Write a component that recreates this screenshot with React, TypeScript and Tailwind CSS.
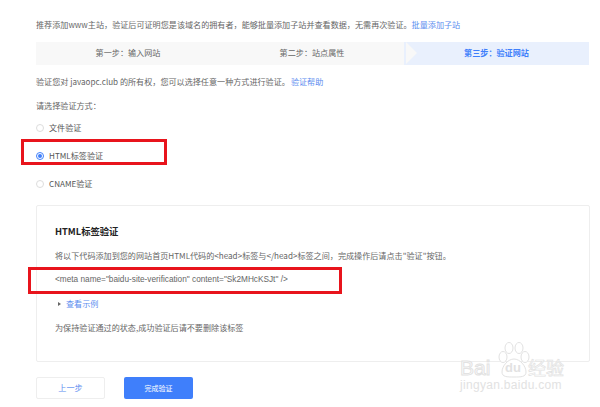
const font = { fontFamily: '"Noto Sans CJK SC", sans-serif' }

function Radio({ label, checked }: { label: string; checked?: boolean }) {
  return (
    <div className="flex h-[28px] items-center gap-[5px] text-[8.1px] text-[#555]">
      <span
        className={
          checked
            ? 'flex h-[8px] w-[8px] items-center justify-center rounded-full border border-[#3f7ffb]'
            : 'h-[8px] w-[8px] rounded-full border border-[#ddd]'
        }
      >
        {checked && <span className="h-[4px] w-[4px] rounded-full bg-[#3f7ffb]" />}
      </span>
      <span>{label}</span>
    </div>
  )
}

function Step({ label, width, active }: { label: string; width: string; active?: boolean }) {
  return (
    <div
      className={`flex items-center justify-center ${width} ${
        active ? 'font-bold text-[#3f7ffb]' : 'text-[#666]'
      }`}
    >
      {label}
    </div>
  )
}

function Watermark() {
  return (
    <div className="absolute left-[460px] top-[342px] w-[110px] text-[#e2e2e2]">
      <svg className="absolute left-[36px] top-0" width="34" height="36" viewBox="0 0 34 36" fill="#fff" stroke="#e2e2e2" strokeWidth="1">
        <ellipse cx="7" cy="15" rx="4" ry="5.5" />
        <ellipse cx="13" cy="6" rx="4" ry="5.5" />
        <ellipse cx="23" cy="6" rx="4" ry="5.5" />
        <ellipse cx="29" cy="15" rx="4" ry="5.5" />
        <path d="M6 30c0-6 6-13 12-13s12 7 12 13c0 5-5 5-12 5s-12 0-12-5z" />
      </svg>
      <div className="relative mt-[14px] flex h-[22px] items-center text-[21px] leading-none" style={{ fontFamily: '"Liberation Sans", sans-serif' }}>
        <span className="w-[45px] text-white [-webkit-text-stroke:1px_#e2e2e2]">Bai</span>
        <span className="w-[23px] text-[13px] font-bold">du</span>
        <span className="text-[18px] text-white [-webkit-text-stroke:0.7px_#e2e2e2]" style={font}>经验</span>
      </div>
      <div className="relative mt-[1px] text-[12px] leading-none tracking-[0.3px]" style={{ fontFamily: '"Liberation Sans", sans-serif' }}>
        jingyan.baidu.com
      </div>
    </div>
  )
}

export default function App() {
  return (
    <div className="relative h-[407px] w-[600px] overflow-hidden bg-white pl-[36px] pr-[10px] pt-[18px] text-[8.1px] text-[#666]" style={font}>
      <p className="flex h-[14px] items-center">
        推荐添加www主站，验证后可证明您是该域名的拥有者，能够批量添加子站并查看数据，无需再次验证。
        <a className="text-[#5b8def]">批量添加子站</a>
      </p>

      <div className="relative mt-[10px] flex h-[23px] w-[553px] bg-[#f8f8f8]">
        <Step label="第一步：输入网站" width="w-[184px]" />
        <Step label="第二步：站点属性" width="w-[184px]" />
        <Step label="第三步：验证网站" width="w-[185px] bg-[#e9f0fd]" active />
        {/* arrow between steps 2 and 3 */}
        <span className="absolute left-[370px] top-0 h-0 w-0 border-y-[11.5px] border-l-[11px] border-y-transparent border-l-[#f8f8f8]" />
      </div>

      <p className="mt-[10px] flex h-[14px] items-center">
        验证您对 javaopc.club 的所有权，您可以选择任意一种方式进行验证。
        <a className="ml-[1px] text-[#5b8def]">验证帮助</a>
      </p>
      <p className="mt-[10px] flex h-[14px] items-center">请选择验证方式：</p>

      <div className="relative mt-[1px]">
        <Radio label="文件验证" />
        <Radio label="HTML标签验证" checked />
        <Radio label="CNAME验证" />
        <span className="absolute left-[-15px] top-[25px] h-[26px] w-[146px] border-[3px] border-[#e8141c]" />
      </div>

      <div className="relative mt-[7px] h-[157px] w-[554px] rounded-[2px] border border-[#eee] pl-[18px] pt-[19px]">
        <h2 className="flex h-[14px] items-center text-[9.3px] font-bold text-[#222]">HTML标签验证</h2>
        <p className="mt-[10px] flex h-[14px] items-center">
          {'将以下代码添加到您的网站首页HTML代码的<head>标签与</head>标签之间，完成操作后请点击"验证"按钮。'}
        </p>
        <p className="relative mt-[10px] flex h-[14px] items-center text-[8.25px]" style={{ fontFamily: '"Liberation Sans", sans-serif' }}>
          {'<meta name="baidu-site-verification" content="Sk2MHcKSJt" />'}
        </p>
        <p className="mt-[10px] flex h-[14px] items-center gap-[5px]">
          <span className="ml-[3px] h-0 w-0 border-y-[2px] border-l-[3px] border-y-transparent border-l-[#666]" />
          <a className="text-[#5b8def]">查看示例</a>
        </p>
        <p className="mt-[10px] flex h-[14px] items-center">为保持验证通过的状态,成功验证后请不要删除该标签</p>
        <span className="absolute left-[-9px] top-[61px] h-[27px] w-[314px] border-[3px] border-[#e8141c]" />
      </div>

      <div className="mt-[15px] flex gap-[19px] text-[8.1px]">
        <button className="h-[22px] w-[69px] rounded-[2px] border border-[#eee] bg-white text-[#5b8def]">上一步</button>
        <button className="h-[22px] w-[69px] rounded-[2px] bg-[#3f7ffb] text-[7px] text-white">完成验证</button>
      </div>

      <Watermark />
    </div>
  )
}
